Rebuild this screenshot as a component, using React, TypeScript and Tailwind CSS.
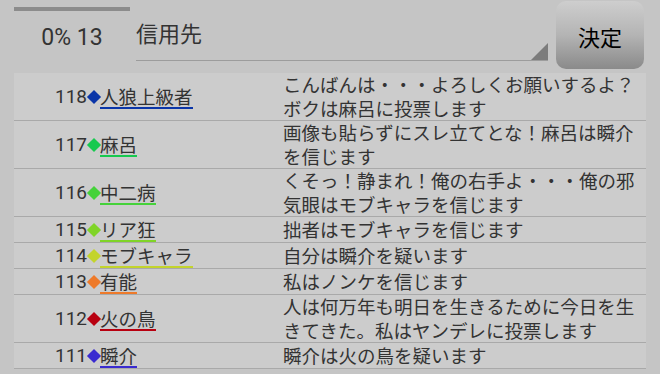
import React from "react";

const rows = [
  { no: 118, name: "人狼上級者", c: "#0a35a8", msg: "こんばんは・・・よろしくお願いするよ？ボクは麻呂に投票します" },
  { no: 117, name: "麻呂", c: "#17c94f", msg: "画像も貼らずにスレ立てとな！麻呂は瞬介を信じます" },
  { no: 116, name: "中二病", c: "#45d23a", msg: "くそっ！静まれ！俺の右手よ・・・俺の邪気眼はモブキャラを信じます" },
  { no: 115, name: "リア狂", c: "#80d428", msg: "拙者はモブキャラを信じます" },
  { no: 114, name: "モブキャラ", c: "#c3d42c", msg: "自分は瞬介を疑います" },
  { no: 113, name: "有能", c: "#ee7a2a", msg: "私はノンケを信じます" },
  { no: 112, name: "火の鳥", c: "#b80010", msg: "人は何万年も明日を生きるために今日を生きてきた。私はヤンデレに投票します" },
  { no: 111, name: "瞬介", c: "#3a2bd0", msg: "瞬介は火の鳥を疑います" },
];

export default function App() {
  return (
    <div className="w-[660px] h-[374px] overflow-hidden bg-[#c5c5c5] text-[#333] font-['Roboto','Noto_Sans_CJK_JP',sans-serif]">
      {/* top bar */}
      <div className="h-[73px] flex pl-[14px]">
        <div className="w-[116px] flex flex-col">
          <div className="mt-[7px] h-[4px] bg-[#8c8c8c]" />
          <div className="mt-[13px] leading-[28px] text-[23px] text-center">0% 13</div>
        </div>
        <div className="ml-[6px] w-[412px] h-[61px] border-b border-[#9c9c9c] relative">
          <div className="pt-[18px] leading-[28px] text-[22px] font-['Noto_Sans_CJK_JP',sans-serif]">信用先</div>
          <div className="absolute right-0 bottom-0 w-0 h-0 border-l-[17px] border-l-transparent border-b-[17px] border-b-[#7c7c7c]" />
        </div>
        <button className="ml-[8px] mt-px w-[88px] h-[68px] rounded-[10px] bg-linear-to-b from-[#cecece] via-[#b4b4b4] to-[#8a8a8a] text-black text-[22px] font-['Noto_Sans_CJK_JP',sans-serif] flex items-center justify-center pt-[3px]">
          決定
        </button>
      </div>

      {/* list */}
      <div className="mx-[14px] bg-[#cccccc]">
        {rows.map((r) => (
          <div key={r.no} className="flex min-h-[26px] border-b border-[#a9a9a9] text-[18.5px]">
            <div className="w-[269px] flex items-center shrink-0">
              <span className="w-[73px] text-right leading-[22px] text-[19px]">{r.no}</span>
              <span className="inline-block w-[10px] h-[10px] rotate-45 ml-[2px] mr-[1px]" style={{ backgroundColor: r.c }} />
              <span
                className="leading-[22px] border-b-2 font-['Noto_Sans_CJK_JP',sans-serif]"
                style={{ borderColor: r.c }}
              >
                {r.name}
              </span>
            </div>
            <div className="flex-1 leading-[23.5px] font-['Noto_Sans_CJK_JP',sans-serif] self-center">{r.msg}</div>
          </div>
        ))}
      </div>
    </div>
  );
}
